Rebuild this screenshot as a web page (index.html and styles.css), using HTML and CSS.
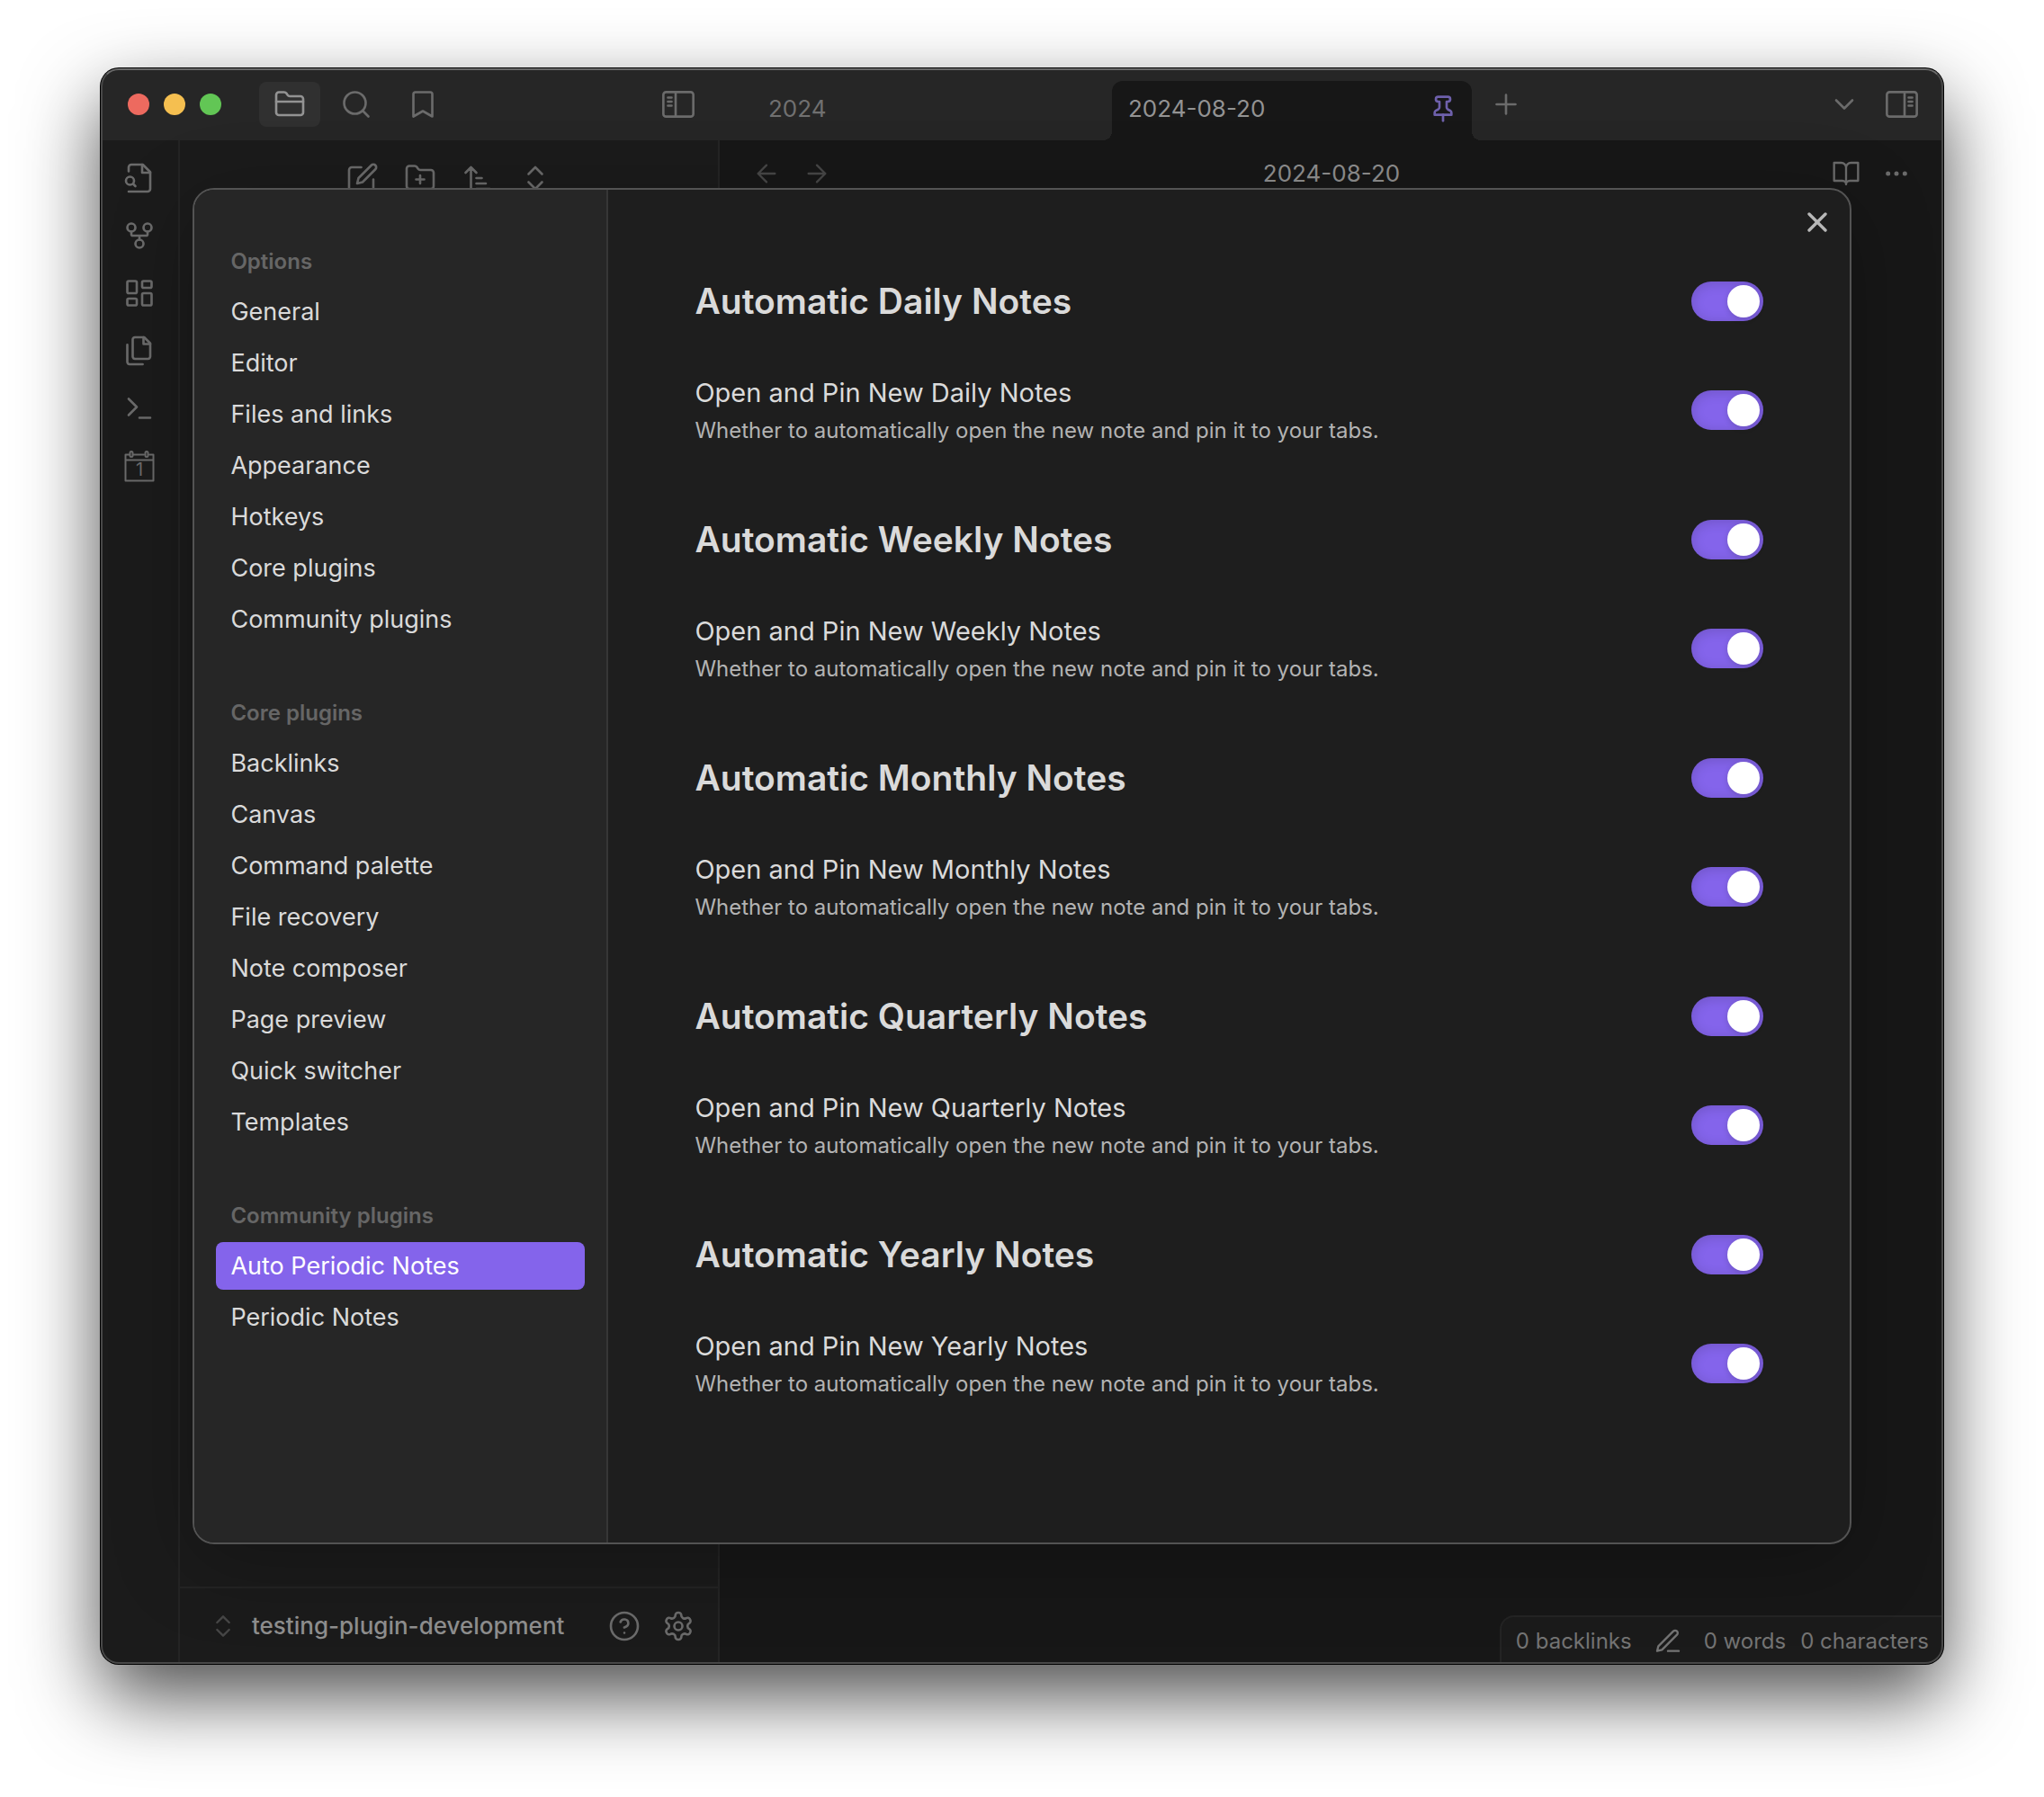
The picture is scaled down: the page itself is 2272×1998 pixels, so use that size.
FILE: index.html
```
<!DOCTYPE html>
<html lang="en">
<head>
<meta charset="utf-8">
<meta name="viewport" content="width=device-width, initial-scale=1">
<title>2024-08-20 - testing-plugin-development</title>
<link rel="stylesheet" href="styles.css">
</head>
<body>
<div class="window">
  <header class="titlebar">
    <div class="titlebar-left">
      <div class="lights">
        <span class="light light-close"></span>
        <span class="light light-minimize"></span>
        <span class="light light-zoom"></span>
      </div>
      <div class="panel-tabs">
        <button class="panel-tab is-active" type="button" aria-label="Files">
          <svg class="icon" viewBox="0 0 24 24"><path d="M20 20a2 2 0 0 0 2-2V8a2 2 0 0 0-2-2h-7.900a2 2 0 0 1-1.690-.9L9.600 3.900A2 2 0 0 0 7.930 3H4a2 2 0 0 0-2 2v13a2 2 0 0 0 2 2Z"/><path d="M2 10h20"/></svg>
        </button>
        <button class="panel-tab" type="button" aria-label="Search">
          <svg class="icon" viewBox="0 0 24 24"><circle cx="11" cy="11" r="8"/><path d="m21 21-4.300-4.300"/></svg>
        </button>
        <button class="panel-tab" type="button" aria-label="Bookmarks">
          <svg class="icon" viewBox="0 0 24 24"><path d="m19 21-7-4-7 4V4.500A1.500 1.500 0 0 1 6.500 3h11A1.500 1.500 0 0 1 19 4.500Z"/></svg>
        </button>
      </div>
      <button class="panel-tab" type="button" aria-label="Toggle left sidebar">
        <svg class="icon" viewBox="0 0 24 24"><rect x="0.900" y="2.900" width="22.200" height="18.200" rx="2"/><path d="M10 3v18M4.300 7H7M4.300 10H7M4.300 13H7"/></svg>
      </button>
    </div>
    <div class="tabs">
      <button class="tab" type="button">2024</button>
      <button class="tab is-active" type="button">2024-08-20
        <svg class="icon icon-small" viewBox="0 0 24 24"><path d="M12 17v5"/><path d="M5 17h14v-1.760a2 2 0 0 0-1.110-1.790l-1.780-.9A2 2 0 0 1 15 10.760V6h1a2 2 0 0 0 0-4H8a2 2 0 0 0 0 4h1v4.760a2 2 0 0 1-1.110 1.790l-1.780.9A2 2 0 0 0 5 15.240Z"/></svg>
      </button>
      <button class="tab-new" type="button" aria-label="New tab">
        <svg class="icon" viewBox="0 0 24 24"><path d="M5 12h14M12 5v14"/></svg>
      </button>
    </div>
    <div class="titlebar-right">
      <button class="icon-button" type="button" aria-label="Tab list">
        <svg class="icon" viewBox="0 0 24 24"><path d="m6 9 6 6 6-6"/></svg>
      </button>
      <button class="icon-button" type="button" aria-label="Toggle right sidebar">
        <svg class="icon" viewBox="0 0 24 24"><rect x="0.900" y="2.900" width="22.200" height="18.200" rx="2"/><path d="M14 3v18M17 7h2.700M17 10h2.700M17 13h2.700"/></svg>
      </button>
    </div>
  </header>

  <div class="workspace">
    <nav class="ribbon" aria-label="Ribbon">
      <button class="icon-button" type="button" aria-label="Open quick switcher">
        <svg class="icon" viewBox="0 0 24 24"><path d="M4 22h14a2 2 0 0 0 2-2V7.500L14.500 2H6a2 2 0 0 0-2 2v3"/><path d="M14 2v6h6"/><circle cx="5" cy="14" r="3"/><path d="m9 18-1.500-1.500"/></svg>
      </button>
      <button class="icon-button" type="button" aria-label="Open graph view">
        <svg class="icon" viewBox="0 0 24 24"><circle cx="12" cy="18" r="3"/><circle cx="6" cy="6" r="3"/><circle cx="18" cy="6" r="3"/><path d="M18 9v2c0 .6-.4 1-1 1H7c-.6 0-1-.4-1-1V9M12 12v3"/></svg>
      </button>
      <button class="icon-button" type="button" aria-label="Create new canvas">
        <svg class="icon" viewBox="0 0 24 24"><rect x="3" y="3" width="7" height="9" rx="1"/><rect x="14" y="3" width="7" height="5" rx="1"/><rect x="14" y="12" width="7" height="9" rx="1"/><rect x="3" y="16" width="7" height="5" rx="1"/></svg>
      </button>
      <button class="icon-button" type="button" aria-label="Insert template">
        <svg class="icon" viewBox="0 0 24 24"><path d="M15.500 2H8.600c-.4 0-.8.2-1.100.5-.3.3-.5.7-.5 1.100v12.800c0 .4.2.8.5 1.100.3.3.7.5 1.100.5h9.800c.4 0 .8-.2 1.100-.5.3-.3.5-.7.5-1.100V6.500L15.500 2z"/><path d="M3 7.600v12.800c0 .4.2.8.5 1.100.3.3.7.5 1.100.5h9.800"/><path d="M15 2v5h5"/></svg>
      </button>
      <button class="icon-button" type="button" aria-label="Open command palette">
        <svg class="icon" viewBox="0 0 24 24"><path d="m4 17 6-6-6-6M12 19h8"/></svg>
      </button>
      <button class="icon-button" type="button" aria-label="Open daily note">
        <svg class="icon icon-day" viewBox="0 0 36 36"><path d="M7 5.500H2.500v29h31v-29H29M11 5.500h12M2.500 11.500h31"/><rect x="7.500" y="2" width="3" height="6" rx="1.500"/><rect x="24.500" y="2" width="3" height="6" rx="1.500"/><text x="18" y="29">1</text></svg>
      </button>
    </nav>

    <aside class="explorer">
      <div class="explorer-actions">
        <button class="icon-button" type="button" aria-label="New note">
          <svg class="icon" viewBox="0 0 24 24"><path d="M11 4H4a2 2 0 0 0-2 2v14a2 2 0 0 0 2 2h14a2 2 0 0 0 2-2v-7"/><path d="M18.500 2.500a2.121 2.121 0 0 1 3 3L12 15l-4 1 1-4 9.500-9.500z"/></svg>
        </button>
        <button class="icon-button" type="button" aria-label="New folder">
          <svg class="icon" viewBox="0 0 24 24"><path d="M20 20a2 2 0 0 0 2-2V8a2 2 0 0 0-2-2h-7.900a2 2 0 0 1-1.690-.9L9.600 3.900A2 2 0 0 0 7.930 3H4a2 2 0 0 0-2 2v13a2 2 0 0 0 2 2Z"/><path d="M12 10v6M9 13h6"/></svg>
        </button>
        <button class="icon-button" type="button" aria-label="Change sort order">
          <svg class="icon" viewBox="0 0 24 24"><path d="m3 8 4-4 4 4M7 4v16M11 12h4M11 16h7M11 20h10"/></svg>
        </button>
        <button class="icon-button" type="button" aria-label="Expand all">
          <svg class="icon" viewBox="0 0 24 24"><path d="m7 15 5 5 5-5M7 9l5-5 5 5"/></svg>
        </button>
      </div>
      <footer class="vault">
        <button class="vault-switch" type="button">
          <svg class="icon icon-small icon-faint" viewBox="0 0 24 24"><path d="m7 15 5 5 5-5M7 9l5-5 5 5"/></svg>
          testing-plugin-development
        </button>
        <button class="icon-button" type="button" aria-label="Help">
          <svg class="icon" viewBox="0 0 24 24"><circle cx="12" cy="12" r="10"/><path d="M9.090 9a3 3 0 0 1 5.830 1c0 2-3 3-3 3M12 17h.01"/></svg>
        </button>
        <button class="icon-button" type="button" aria-label="Settings">
          <svg class="icon" viewBox="0 0 24 24"><path d="M12.220 2h-.44a2 2 0 0 0-2 2v.18a2 2 0 0 1-1 1.730l-.43.25a2 2 0 0 1-2 0l-.15-.08a2 2 0 0 0-2.730.73l-.22.38a2 2 0 0 0 .73 2.730l.15.1a2 2 0 0 1 1 1.720v.51a2 2 0 0 1-1 1.740l-.15.09a2 2 0 0 0-.73 2.730l.22.38a2 2 0 0 0 2.730.73l.15-.08a2 2 0 0 1 2 0l.43.25a2 2 0 0 1 1 1.730V20a2 2 0 0 0 2 2h.44a2 2 0 0 0 2-2v-.18a2 2 0 0 1 1-1.730l.43-.25a2 2 0 0 1 2 0l.15.08a2 2 0 0 0 2.730-.73l.22-.39a2 2 0 0 0-.73-2.730l-.15-.08a2 2 0 0 1-1-1.740v-.5a2 2 0 0 1 1-1.740l.15-.09a2 2 0 0 0 .73-2.730l-.22-.38a2 2 0 0 0-2.730-.73l-.15.08a2 2 0 0 1-2 0l-.43-.25a2 2 0 0 1-1-1.730V4a2 2 0 0 0-2-2z"/><circle cx="12" cy="12" r="3"/></svg>
        </button>
      </footer>
    </aside>

    <main class="editor">
      <div class="view-header">
        <div class="view-nav">
          <button class="icon-button" type="button" aria-label="Back">
            <svg class="icon icon-small icon-faint" viewBox="0 0 24 24"><path d="m12 19-7-7 7-7M19 12H5"/></svg>
          </button>
          <button class="icon-button" type="button" aria-label="Forward">
            <svg class="icon icon-small icon-faint" viewBox="0 0 24 24"><path d="m12 5 7 7-7 7M5 12h14"/></svg>
          </button>
        </div>
        <div class="view-title">2024-08-20</div>
        <div class="view-actions">
          <button class="icon-button" type="button" aria-label="Reading view">
            <svg class="icon icon-small" viewBox="0 0 24 24"><path d="M2 3h6a4 4 0 0 1 4 4v14a3 3 0 0 0-3-3H2zM22 3h-6a4 4 0 0 0-4 4v14a3 3 0 0 1 3-3h7z"/></svg>
          </button>
          <button class="icon-button" type="button" aria-label="More options">
            <svg class="icon icon-small icon-dots" viewBox="0 0 24 24"><circle cx="5" cy="12" r="1"/><circle cx="12" cy="12" r="1"/><circle cx="19" cy="12" r="1"/></svg>
          </button>
        </div>
      </div>
      <div class="status-bar">
        <span>0 backlinks</span>
        <svg class="icon icon-small status-icon" viewBox="0 0 24 24"><path d="M12 20h9"/><path d="M16.500 3.500a2.121 2.121 0 0 1 3 3L7 19l-4 1 1-4L16.500 3.500z"/></svg>
        <span>0 words</span>
        <span>0 characters</span>
      </div>
    </main>
  </div>

  <div class="overlay">
    <div class="modal" role="dialog" aria-label="Settings">
      <nav class="settings-nav">
        <section class="nav-group">
          <h3 class="nav-title">Options</h3>
          <button class="nav-item" type="button">General</button>
          <button class="nav-item" type="button">Editor</button>
          <button class="nav-item" type="button">Files and links</button>
          <button class="nav-item" type="button">Appearance</button>
          <button class="nav-item" type="button">Hotkeys</button>
          <button class="nav-item" type="button">Core plugins</button>
          <button class="nav-item" type="button">Community plugins</button>
        </section>
        <section class="nav-group">
          <h3 class="nav-title">Core plugins</h3>
          <button class="nav-item" type="button">Backlinks</button>
          <button class="nav-item" type="button">Canvas</button>
          <button class="nav-item" type="button">Command palette</button>
          <button class="nav-item" type="button">File recovery</button>
          <button class="nav-item" type="button">Note composer</button>
          <button class="nav-item" type="button">Page preview</button>
          <button class="nav-item" type="button">Quick switcher</button>
          <button class="nav-item" type="button">Templates</button>
        </section>
        <section class="nav-group">
          <h3 class="nav-title">Community plugins</h3>
          <button class="nav-item is-active" type="button">Auto Periodic Notes</button>
          <button class="nav-item" type="button">Periodic Notes</button>
        </section>
      </nav>

      <div class="settings-content">
        <section class="setting-group">
          <div class="setting">
            <h2 class="setting-heading"><label for="daily">Automatic Daily Notes</label></h2>
            <input class="toggle" type="checkbox" id="daily" checked>
          </div>
          <div class="setting">
            <div class="setting-info">
              <label class="setting-name" for="daily-open">Open and Pin New Daily Notes</label>
              <p class="setting-desc">Whether to automatically open the new note and pin it to your tabs.</p>
            </div>
            <input class="toggle" type="checkbox" id="daily-open" checked>
          </div>
        </section>
        <section class="setting-group">
          <div class="setting">
            <h2 class="setting-heading"><label for="weekly">Automatic Weekly Notes</label></h2>
            <input class="toggle" type="checkbox" id="weekly" checked>
          </div>
          <div class="setting">
            <div class="setting-info">
              <label class="setting-name" for="weekly-open">Open and Pin New Weekly Notes</label>
              <p class="setting-desc">Whether to automatically open the new note and pin it to your tabs.</p>
            </div>
            <input class="toggle" type="checkbox" id="weekly-open" checked>
          </div>
        </section>
        <section class="setting-group">
          <div class="setting">
            <h2 class="setting-heading"><label for="monthly">Automatic Monthly Notes</label></h2>
            <input class="toggle" type="checkbox" id="monthly" checked>
          </div>
          <div class="setting">
            <div class="setting-info">
              <label class="setting-name" for="monthly-open">Open and Pin New Monthly Notes</label>
              <p class="setting-desc">Whether to automatically open the new note and pin it to your tabs.</p>
            </div>
            <input class="toggle" type="checkbox" id="monthly-open" checked>
          </div>
        </section>
        <section class="setting-group">
          <div class="setting">
            <h2 class="setting-heading"><label for="quarterly">Automatic Quarterly Notes</label></h2>
            <input class="toggle" type="checkbox" id="quarterly" checked>
          </div>
          <div class="setting">
            <div class="setting-info">
              <label class="setting-name" for="quarterly-open">Open and Pin New Quarterly Notes</label>
              <p class="setting-desc">Whether to automatically open the new note and pin it to your tabs.</p>
            </div>
            <input class="toggle" type="checkbox" id="quarterly-open" checked>
          </div>
        </section>
        <section class="setting-group">
          <div class="setting">
            <h2 class="setting-heading"><label for="yearly">Automatic Yearly Notes</label></h2>
            <input class="toggle" type="checkbox" id="yearly" checked>
          </div>
          <div class="setting">
            <div class="setting-info">
              <label class="setting-name" for="yearly-open">Open and Pin New Yearly Notes</label>
              <p class="setting-desc">Whether to automatically open the new note and pin it to your tabs.</p>
            </div>
            <input class="toggle" type="checkbox" id="yearly-open" checked>
          </div>
        </section>
      </div>

      <button class="modal-close" type="button" aria-label="Close">
        <svg class="icon" viewBox="0 0 24 24"><path d="M18 6 6 18M6 6l12 12"/></svg>
      </button>
    </div>
  </div>
</div>
</body>
</html>
```
FILE: styles.css
```
:root {
  --bar: #262626;
  --panel: #1b1b1b;
  --editor: #171717;
  --line: #242424;
  --icon: #6b6b6b;
  --accent: #8464eb;
}

*,
*::before,
*::after {
  box-sizing: border-box;
}

body {
  display: flex;
  min-height: 100vh;
  margin: 0;
  padding: 76px 112px 148px;
  background: #fff;
  font-family: Inter, "Liberation Sans", sans-serif;
  font-size: 26px;
  line-height: 32px;
}

h2,
h3,
p {
  margin: 0;
}

button {
  margin: 0;
  padding: 0;
  border: 0;
  background: none;
  color: inherit;
  font: inherit;
}

.icon {
  display: block;
  flex: none;
  width: 36px;
  height: 36px;
  fill: none;
  stroke: currentColor;
  stroke-width: 1.75;
  stroke-linecap: round;
  stroke-linejoin: round;
}

.icon-small {
  width: 32px;
  height: 32px;
}

.icon-faint {
  color: #474747;
}

.icon-dots {
  fill: currentColor;
}

.icon-day {
  stroke-width: 2;
}

.icon-day text {
  fill: currentColor;
  stroke: none;
  font-size: 20px;
  text-anchor: middle;
}

.icon-button {
  display: block;
  flex: none;
}

/* Window */

.window {
  position: relative;
  display: flex;
  flex: 1;
  flex-direction: column;
  min-width: 0;
  overflow: hidden;
  border-radius: 20px;
  background: var(--editor);
  color: var(--icon);
  box-shadow: 0 0 0 1px #000, 0 36px 86px rgba(0, 0, 0, 0.7);
}

.window::after {
  content: "";
  position: absolute;
  inset: 0;
  border: 2px solid #484848;
  border-top-color: #6a6a6a;
  border-radius: 20px;
  pointer-events: none;
}

.titlebar {
  display: flex;
  height: 80px;
  background: var(--bar);
}

.titlebar-left {
  display: flex;
  flex: none;
  align-items: center;
  width: 688px;
  padding: 0 12px 0 30px;
}

.lights {
  display: flex;
  gap: 16px;
  margin-right: 42px;
}

.light {
  width: 24px;
  height: 24px;
  border-radius: 50%;
}

.light-close {
  background: #ed6a5f;
}

.light-minimize {
  background: #f5bf50;
}

.light-zoom {
  background: #62c655;
}

.panel-tabs {
  display: flex;
  flex: 1;
  gap: 6px;
}

.panel-tab {
  display: flex;
  align-items: center;
  justify-content: center;
  width: 68px;
  height: 50px;
  border-radius: 8px;
}

.panel-tab.is-active {
  background: #303030;
  color: #939393;
}

.tabs {
  display: flex;
  flex: 1;
  align-items: flex-end;
  min-width: 0;
  padding-left: 36px;
}

.tab {
  position: relative;
  display: flex;
  flex: 0 1 400px;
  align-items: center;
  justify-content: space-between;
  height: 66px;
  padding: 0 16px 4px 18px;
  color: #707070;
}

.tab.is-active {
  border-radius: 12px 12px 0 0;
  background: var(--editor);
  color: #939393;
}

.tab.is-active::before,
.tab.is-active::after {
  content: "";
  position: absolute;
  bottom: 0;
  width: 10px;
  height: 10px;
}

.tab.is-active::before {
  right: 100%;
  background: radial-gradient(circle at 0 0, transparent 10px, var(--editor) 10px);
}

.tab.is-active::after {
  left: 100%;
  background: radial-gradient(circle at 100% 0, transparent 10px, var(--editor) 10px);
}

.tab .icon {
  color: #6e60ab;
  stroke-width: 2;
}

.tab-new {
  display: flex;
  align-items: center;
  justify-content: center;
  width: 76px;
  height: 80px;
}

.titlebar-right {
  display: flex;
  align-items: center;
  gap: 28px;
  padding-right: 28px;
}

/* Workspace */

.workspace {
  display: flex;
  flex: 1;
}

.ribbon {
  display: flex;
  flex: none;
  flex-direction: column;
  align-items: center;
  gap: 28px;
  width: 88px;
  padding-top: 24px;
  border-right: 2px solid var(--line);
  background: var(--panel);
}

.explorer {
  display: flex;
  flex: none;
  flex-direction: column;
  justify-content: space-between;
  width: 600px;
  border-right: 2px solid var(--line);
  background: var(--panel);
}

.explorer-actions {
  display: flex;
  justify-content: center;
  gap: 28px;
  padding-top: 24px;
}

.vault {
  display: flex;
  align-items: center;
  gap: 24px;
  height: 86px;
  padding: 0 26px 0 32px;
  border-top: 2px solid var(--line);
}

.vault-switch {
  display: flex;
  flex: 1;
  align-items: center;
  gap: 16px;
  color: #8f8f8f;
  font-weight: 500;
}

.editor {
  position: relative;
  flex: 1;
  min-width: 0;
}

.view-header {
  display: grid;
  grid-template-columns: 1fr auto 1fr;
  align-items: center;
  height: 74px;
  padding: 0 36px;
}

.view-nav,
.view-actions {
  display: flex;
  gap: 24px;
}

.view-actions {
  justify-content: flex-end;
}

.view-title {
  color: #8f8f8f;
}

.status-bar {
  position: absolute;
  right: 0;
  bottom: 0;
  display: flex;
  align-items: center;
  gap: 16px;
  height: 54px;
  padding: 2px 16px 0;
  border-top: 2px solid var(--line);
  border-left: 2px solid var(--line);
  border-top-left-radius: 16px;
  background: var(--panel);
  color: #747474;
  font-size: 24px;
}

.status-icon {
  margin: 0 8px;
}

/* Settings dialog */

.overlay {
  position: absolute;
  inset: 0;
  display: flex;
  align-items: center;
  justify-content: center;
}

.modal {
  position: relative;
  display: flex;
  width: 90%;
  height: 85%;
  overflow: hidden;
  border: 2px solid #535353;
  border-radius: 24px;
  background: #1e1e1e;
  color: #dadada;
  box-shadow: 0 20px 90px rgba(0, 0, 0, 0.25);
}

.settings-nav {
  display: flex;
  flex: none;
  flex-direction: column;
  gap: 63px;
  width: 460px;
  padding: 65px 24px 0;
  border-right: 2px solid #363636;
  background: #262626;
}

.nav-group {
  display: flex;
  flex-direction: column;
  gap: 4px;
}

.nav-title {
  padding: 0 16px 10px;
  color: #666;
  font-size: 24px;
  font-weight: 600;
  line-height: 30px;
}

.nav-item {
  padding: 10px 16px;
  border-radius: 8px;
  font-size: 27px;
  line-height: 33px;
  text-align: left;
}

.nav-item.is-active {
  background: var(--accent);
  color: #fff;
}

.settings-content {
  display: flex;
  flex: 1;
  flex-direction: column;
  gap: 82px;
  min-width: 0;
  padding: 100px 96px;
}

.setting-group {
  display: flex;
  flex-direction: column;
  gap: 59px;
}

.setting {
  display: flex;
  align-items: center;
  justify-content: space-between;
}

.setting-heading {
  font-size: 39px;
  font-weight: 600;
  line-height: 48px;
}

.setting-info {
  display: flex;
  flex-direction: column;
  gap: 8px;
}

.setting-name {
  font-size: 29px;
  line-height: 38px;
}

.setting-desc {
  color: #b3b3b3;
  font-size: 24px;
  line-height: 30px;
}

.toggle {
  display: flex;
  flex: none;
  align-items: center;
  width: 80px;
  height: 44px;
  margin: 0;
  padding: 4px;
  border-radius: 22px;
  background: #484848;
  box-shadow: inset 0 2px 14px rgba(0, 0, 0, 0.16);
  appearance: none;
}

.toggle::before {
  content: "";
  width: 36px;
  height: 36px;
  border-radius: 50%;
  background: #fff;
  box-shadow: 0 2px 6px rgba(0, 0, 0, 0.15);
}

.toggle:checked {
  justify-content: flex-end;
  background: var(--accent);
}

.modal-close {
  position: absolute;
  top: 14px;
  right: 14px;
  display: flex;
  align-items: center;
  justify-content: center;
  width: 44px;
  height: 44px;
  color: #b8b8b8;
}

.modal-close .icon {
  stroke-width: 2.25;
}
```
